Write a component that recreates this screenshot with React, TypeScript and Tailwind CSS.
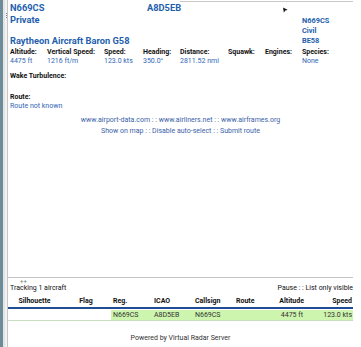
import React from 'react';

const labels = [
  { label: 'Altitude:', value: '4475 ft', w: 'w-[37px]' },
  { label: 'Vertical Speed:', value: '1216 ft/m', w: 'w-[57px]' },
  { label: 'Speed:', value: '123.0 kts', w: 'w-[39px]' },
  { label: 'Heading:', value: '350.0°', w: 'w-[37px]' },
  { label: 'Distance:', value: '2811.52 nmi', w: 'w-[48px]' },
  { label: 'Squawk:', value: '', w: 'w-[37px]' },
  { label: 'Engines:', value: '', w: 'w-[37px]' },
  { label: 'Species:', value: 'None', w: 'w-[44px]' },
];

const headers = [
  { t: 'Silhouette', c: 'text-center' },
  { t: 'Flag', c: 'text-center' },
  { t: 'Reg.', c: 'text-left pl-[2px]' },
  { t: 'ICAO', c: 'text-left pl-[2px]' },
  { t: 'Callsign', c: 'text-left pl-[2px]' },
  { t: 'Route', c: 'text-left pl-[2px]' },
  { t: 'Altitude', c: 'text-right pr-[2px]' },
  { t: 'Speed', c: 'text-right pr-[1px]' },
];

const row = [
  { t: '', c: 'bg-white' },
  { t: '', c: 'bg-white' },
  { t: 'N669CS', c: 'bg-[#cdf5ad] pl-[2px]' },
  { t: 'A8D5EB', c: 'bg-[#cdf5ad] pl-[2px]' },
  { t: 'N669CS', c: 'bg-[#cdf5ad] pl-[2px]' },
  { t: '', c: 'bg-[#cdf5ad]' },
  { t: '4475 ft', c: 'bg-[#cdf5ad] text-right pr-[3px]' },
  { t: '123.0 kts', c: 'bg-[#cdf5ad] text-right pr-[1px]' },
];

export default function App() {
  return (
    <div className="flex h-[347px] w-[361px] overflow-hidden bg-white font-['Roboto',sans-serif] text-[#222]">
      {/* left splitter strip */}
      <div className="w-[3px] bg-[#6b8c98]" />
      <div className="w-[2px] bg-[#e4e4e4]" />
      <div className="flex w-[3px] flex-col items-center border-r border-[#c6c6c6] bg-[#f3f3f3] pt-[13px]">
        <div className="h-[1px] w-[1px] bg-[#888]" />
        <div className="mt-[1px] h-[1px] w-[1px] bg-[#888]" />
        <div className="mt-[1px] h-[1px] w-[1px] bg-[#888]" />
      </div>

      <div className="flex w-[345px] flex-col">
        {/* detail panel */}
        <div className="flex h-[277px] flex-col pl-[2px]">
          <div className="h-[2px] w-full">
            <div className="ml-[170px] h-[2px] border-b border-[#c8c8c8]" />
          </div>
          <div className="flex">
            <div className="w-[292px]">
              <div className="flex h-[12px] items-center text-[9.3px] font-bold leading-[12px] text-[#1f5fae]">
                <span className="w-[137px]">N669CS</span>
                <span className="w-[135px]">A8D5EB</span>
                <svg width="5" height="5" viewBox="0 0 6 6" className="mt-[2px] -rotate-[35deg]">
                  <polygon points="3,0 6,6 3,4.3 0,6" fill="#111" />
                </svg>
              </div>
              <div className="h-[12px] text-[9.3px] font-bold leading-[12px] text-[#1f5fae]">Private</div>
              <div className="mt-[9px] h-[12px] text-[9.3px] font-bold leading-[12px] text-[#1f5fae]">
                Raytheon Aircraft Baron G58
              </div>
            </div>
            <div className="pt-[14px] text-[7.4px] font-bold leading-[10px] text-[#1f5fae]">
              <div>N669CS</div>
              <div>Civil</div>
              <div>BE58</div>
            </div>
          </div>

          <div className="mt-[1px] flex">
            {labels.map((l) => (
              <div key={l.label} className={`${l.w} shrink-0`}>
                <div className="h-[9px] whitespace-nowrap text-[7px] font-bold leading-[9px] text-[#111]">{l.label}</div>
                <div className="h-[9px] whitespace-nowrap text-[7px] leading-[9px] text-[#2f66b5]">{l.value}</div>
              </div>
            ))}
          </div>

          <div className="mt-[6px] h-[9px] text-[7px] font-bold leading-[9px] text-[#111]">Wake Turbulence:</div>

          <div className="mt-[12px] h-[9px] text-[7px] font-bold leading-[9px] text-[#111]">Route:</div>
          <div className="h-[9px] text-[7px] leading-[9px] text-[#2f66b5]">Route not known</div>

          <div className="mt-[4px] pr-[2px] text-center text-[7px] leading-[11px] text-[#3b5fa8]">
            <div>www.airport-data.com : : www.airliners.net : : www.airframes.org</div>
            <div>Show on map : : Disable auto-select : : Submit route</div>
          </div>
        </div>

        {/* horizontal splitter */}
        <div className="h-[1px] bg-[#c4c4c4]" />
        <div className="h-[6px] pl-[12px] text-[6px] leading-[6px] text-[#777]">++</div>

        {/* aircraft list */}
        <div className="flex h-[9px] justify-between pl-[2px] text-[7px] leading-[9px] text-[#111]">
          <span>Tracking 1 aircraft</span>
          <span>Pause : : List only visible</span>
        </div>

        <div className="mt-[4px] grid grid-cols-[53px_50px_41px_41px_41px_35px_37px_47px] text-[7px] font-bold leading-[9px] text-[#111]">
          {headers.map((h) => (
            <div key={h.t} className={h.c}>{h.t}</div>
          ))}
        </div>
        <div className="mt-[1px] h-[1.5px] bg-[#1f4e94]" />
        <div className="mt-[1px] grid grid-cols-[53px_50px_41px_41px_41px_35px_37px_47px] border-b border-[#c8dcc0] text-[7px] leading-[10px] text-[#333]">
          {row.map((c, i) => (
            <div key={i} className={`h-[10px] ${c.c}`}>{c.t}</div>
          ))}
        </div>

        <div className="mt-[13px] text-center text-[7px] leading-[9px] text-[#333]">Powered by Virtual Radar Server</div>
      </div>
    </div>
  );
}
